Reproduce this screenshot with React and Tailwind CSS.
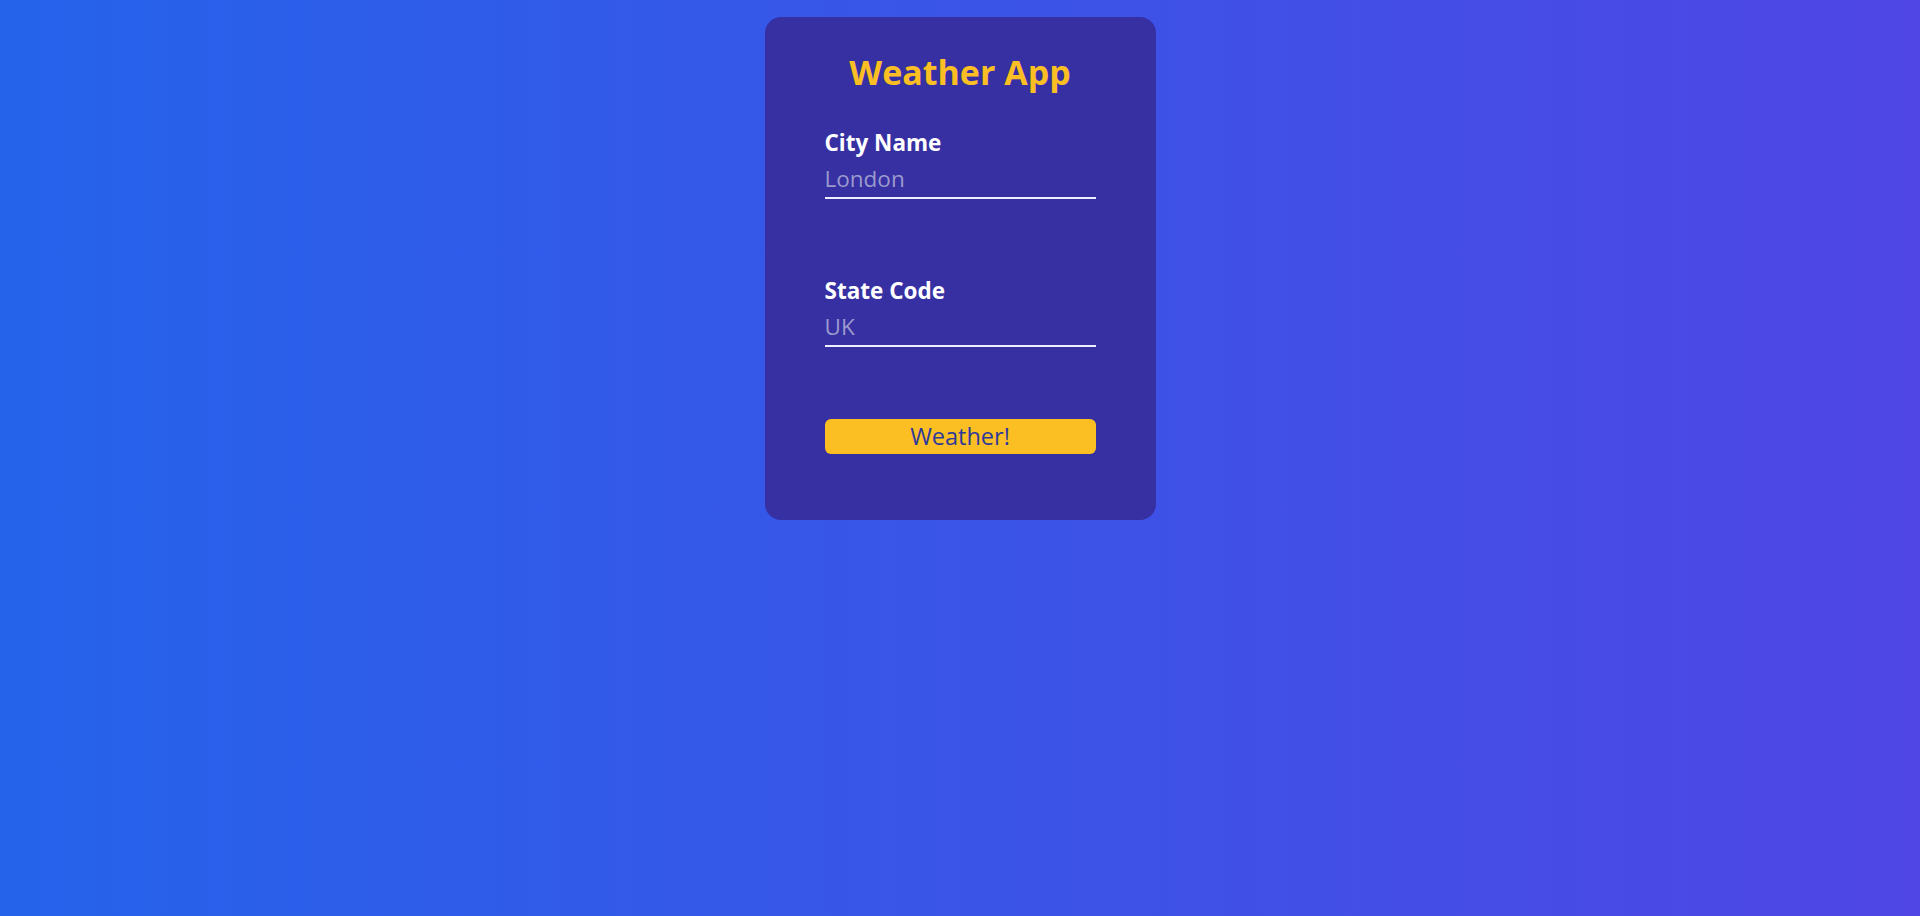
import { useState } from 'react';

function Field({ label, placeholder, value, onChange }) {
  return (
    <div className="flex flex-col">
      <label className="text-white font-bold text-[22.5px] leading-7">{label}</label>
      <input
        type="text"
        value={value}
        onChange={e => onChange(e.target.value)}
        placeholder={placeholder}
        className="mt-2 bg-transparent text-white text-[22.5px] leading-7 pb-1 border-b-2 border-[#eef0ff] outline-none placeholder:text-[#9b9acd]"
      />
    </div>
  );
}

export default function App() {
  const [city, setCity]   = useState('');
  const [state, setState] = useState('');

  return (
    <div
      className="min-h-screen w-full bg-[linear-gradient(to_right,#2563eb,#4f46e5)] flex justify-center"
      style={{ fontFamily: '"Open Sans", sans-serif' }}
    >
      <div className="mt-[17px] self-start w-[391px] bg-[#3730a3] rounded-2xl px-[60px] pt-[35px] pb-[66px] flex flex-col">
        <h1 className="text-[#fbbf24] text-[34px] leading-10 font-bold text-center">Weather App</h1>

        {/* Form */}
        <form className="mt-[37px] flex flex-col" onSubmit={e => e.preventDefault()}>
          <Field label="City Name" placeholder="London" value={city} onChange={setCity} />
          <div className="mt-[78px]">
            <Field label="State Code" placeholder="UK" value={state} onChange={setState} />
          </div>
          <button
            type="submit"
            className="mt-[72px] h-[35px] w-full rounded-md bg-[#fbbf24] text-[#2e3a9a] text-[23.5px] leading-none flex items-center justify-center"
          >
            Weather!
          </button>
        </form>
      </div>
    </div>
  );
}
